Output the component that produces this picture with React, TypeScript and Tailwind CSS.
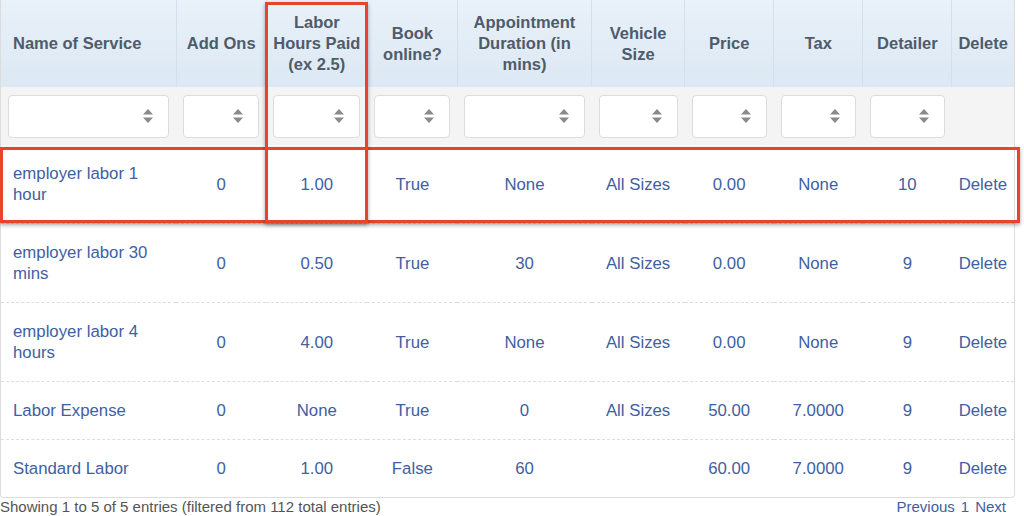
import React from "react";

type Row = {
  name: string;
  addOns: string;
  hours: string;
  online: string;
  duration: string;
  size: string;
  price: string;
  tax: string;
  detailer: string;
};

const rows: Row[] = [
  { name: "employer labor 1 hour", addOns: "0", hours: "1.00", online: "True", duration: "None", size: "All Sizes", price: "0.00", tax: "None", detailer: "10" },
  { name: "employer labor 30 mins", addOns: "0", hours: "0.50", online: "True", duration: "30", size: "All Sizes", price: "0.00", tax: "None", detailer: "9" },
  { name: "employer labor 4 hours", addOns: "0", hours: "4.00", online: "True", duration: "None", size: "All Sizes", price: "0.00", tax: "None", detailer: "9" },
  { name: "Labor Expense", addOns: "0", hours: "None", online: "True", duration: "0", size: "All Sizes", price: "50.00", tax: "7.0000", detailer: "9" },
  { name: "Standard Labor", addOns: "0", hours: "1.00", online: "False", duration: "60", size: "", price: "60.00", tax: "7.0000", detailer: "9" },
];

const widths = [175, 90, 101, 90, 134, 93, 89, 89, 89, 62];

// header labels, split where the page breaks them
const headers: string[][] = [
  ["Name of Service"],
  ["Add Ons"],
  ["Labor", "Hours Paid", "(ex 2.5)"],
  ["Book", "online?"],
  ["Appointment", "Duration (in", "mins)"],
  ["Vehicle", "Size"],
  ["Price"],
  ["Tax"],
  ["Detailer"],
  ["Delete"],
];

const SortIcon = () => (
  <svg width="12" height="18" viewBox="0 0 12 18" className="shrink-0">
    <path d="M1 7.5 L6 2 L11 7.5 Z" fill="#8a8a8a" />
    <path d="M1 10.5 L11 10.5 L6 16 Z" fill="#8a8a8a" />
  </svg>
);

const FilterBox = () => (
  <div className="h-[43px] w-full bg-white border border-[#dcdcdc] rounded-[4px] flex items-center justify-end pr-[14px]">
    <SortIcon />
  </div>
);

const App = () => {
  return (
    <div className="w-[1024px] h-[516px] bg-white overflow-hidden relative font-['Liberation_Sans',Arial,sans-serif]">
      <div className="w-[1015px] border border-t-0 border-[#dcdcdc] rounded-b-[4px] overflow-hidden">
        <table className="table-fixed border-collapse w-[1013px]">
          <colgroup>
            {widths.map((w, i) => (
              <col key={i} style={{ width: w }} />
            ))}
          </colgroup>
          <thead>
            <tr className="bg-gradient-to-b from-[#e9f1f9] to-[#dce8f3] h-[87px]">
              {headers.map((lines, i) => (
                <th
                  key={i}
                  className={`px-[2px] py-[12px] text-[16.5px] leading-[21px] font-bold text-[#4e5b6b] align-middle whitespace-nowrap ${
                    i === 0 ? "text-left pl-[12px]" : "text-center"
                  } ${i < headers.length - 1 ? "border-r border-[#d3e0ec]" : ""}`}
                >
                  {lines.map((l) => (
                    <div key={l}>{l}</div>
                  ))}
                </th>
              ))}
            </tr>
            <tr className="bg-[#f4f4f4] h-[58px]">
              {headers.map((_, i) => (
                <td key={i} className="px-[7px] py-[7px]">
                  {i < headers.length - 1 && <FilterBox />}
                </td>
              ))}
            </tr>
          </thead>
          <tbody className="text-[#4060a2] text-[16.8px] leading-[21px]">
            {rows.map((r, idx) => {
              const cells = [r.addOns, r.hours, r.online, r.duration, r.size, r.price, r.tax, r.detailer, "Delete"];
              const border = idx < rows.length - 1 ? "border-b border-dashed border-[#dedede]" : "";
              return (
                <tr key={r.name}>
                  <td className={`pl-[12px] pr-[10px] py-[18px] text-left ${border}`}>{r.name}</td>
                  {cells.map((c, j) => (
                    <td key={j} className={`px-[4px] py-[18px] text-center whitespace-nowrap ${border}`}>
                      {c}
                    </td>
                  ))}
                </tr>
              );
            })}
          </tbody>
        </table>
      </div>
      <div className="w-[1015px] flex justify-between items-center text-[15px] leading-[18px]">
        <span className="text-[#555]">Showing 1 to 5 of 5 entries (filtered from 112 total entries)</span>
        <span className="text-[#4060a2] pr-[9px] flex gap-[6px]">
          <span>Previous</span>
          <span>1</span>
          <span>Next</span>
        </span>
      </div>

      {/* annotation boxes */}
      <div className="absolute left-0 top-[147px] w-[1020px] h-[76px] border-[3px] border-[#e8432d] shadow-[0_2px_4px_rgba(0,0,0,0.35)] pointer-events-none" />
      <div className="absolute left-[265px] top-[2px] w-[103px] h-[221px] border-[3px] border-[#e8432d] shadow-[0_2px_4px_rgba(0,0,0,0.35)] pointer-events-none" />
    </div>
  );
};

export default App;
